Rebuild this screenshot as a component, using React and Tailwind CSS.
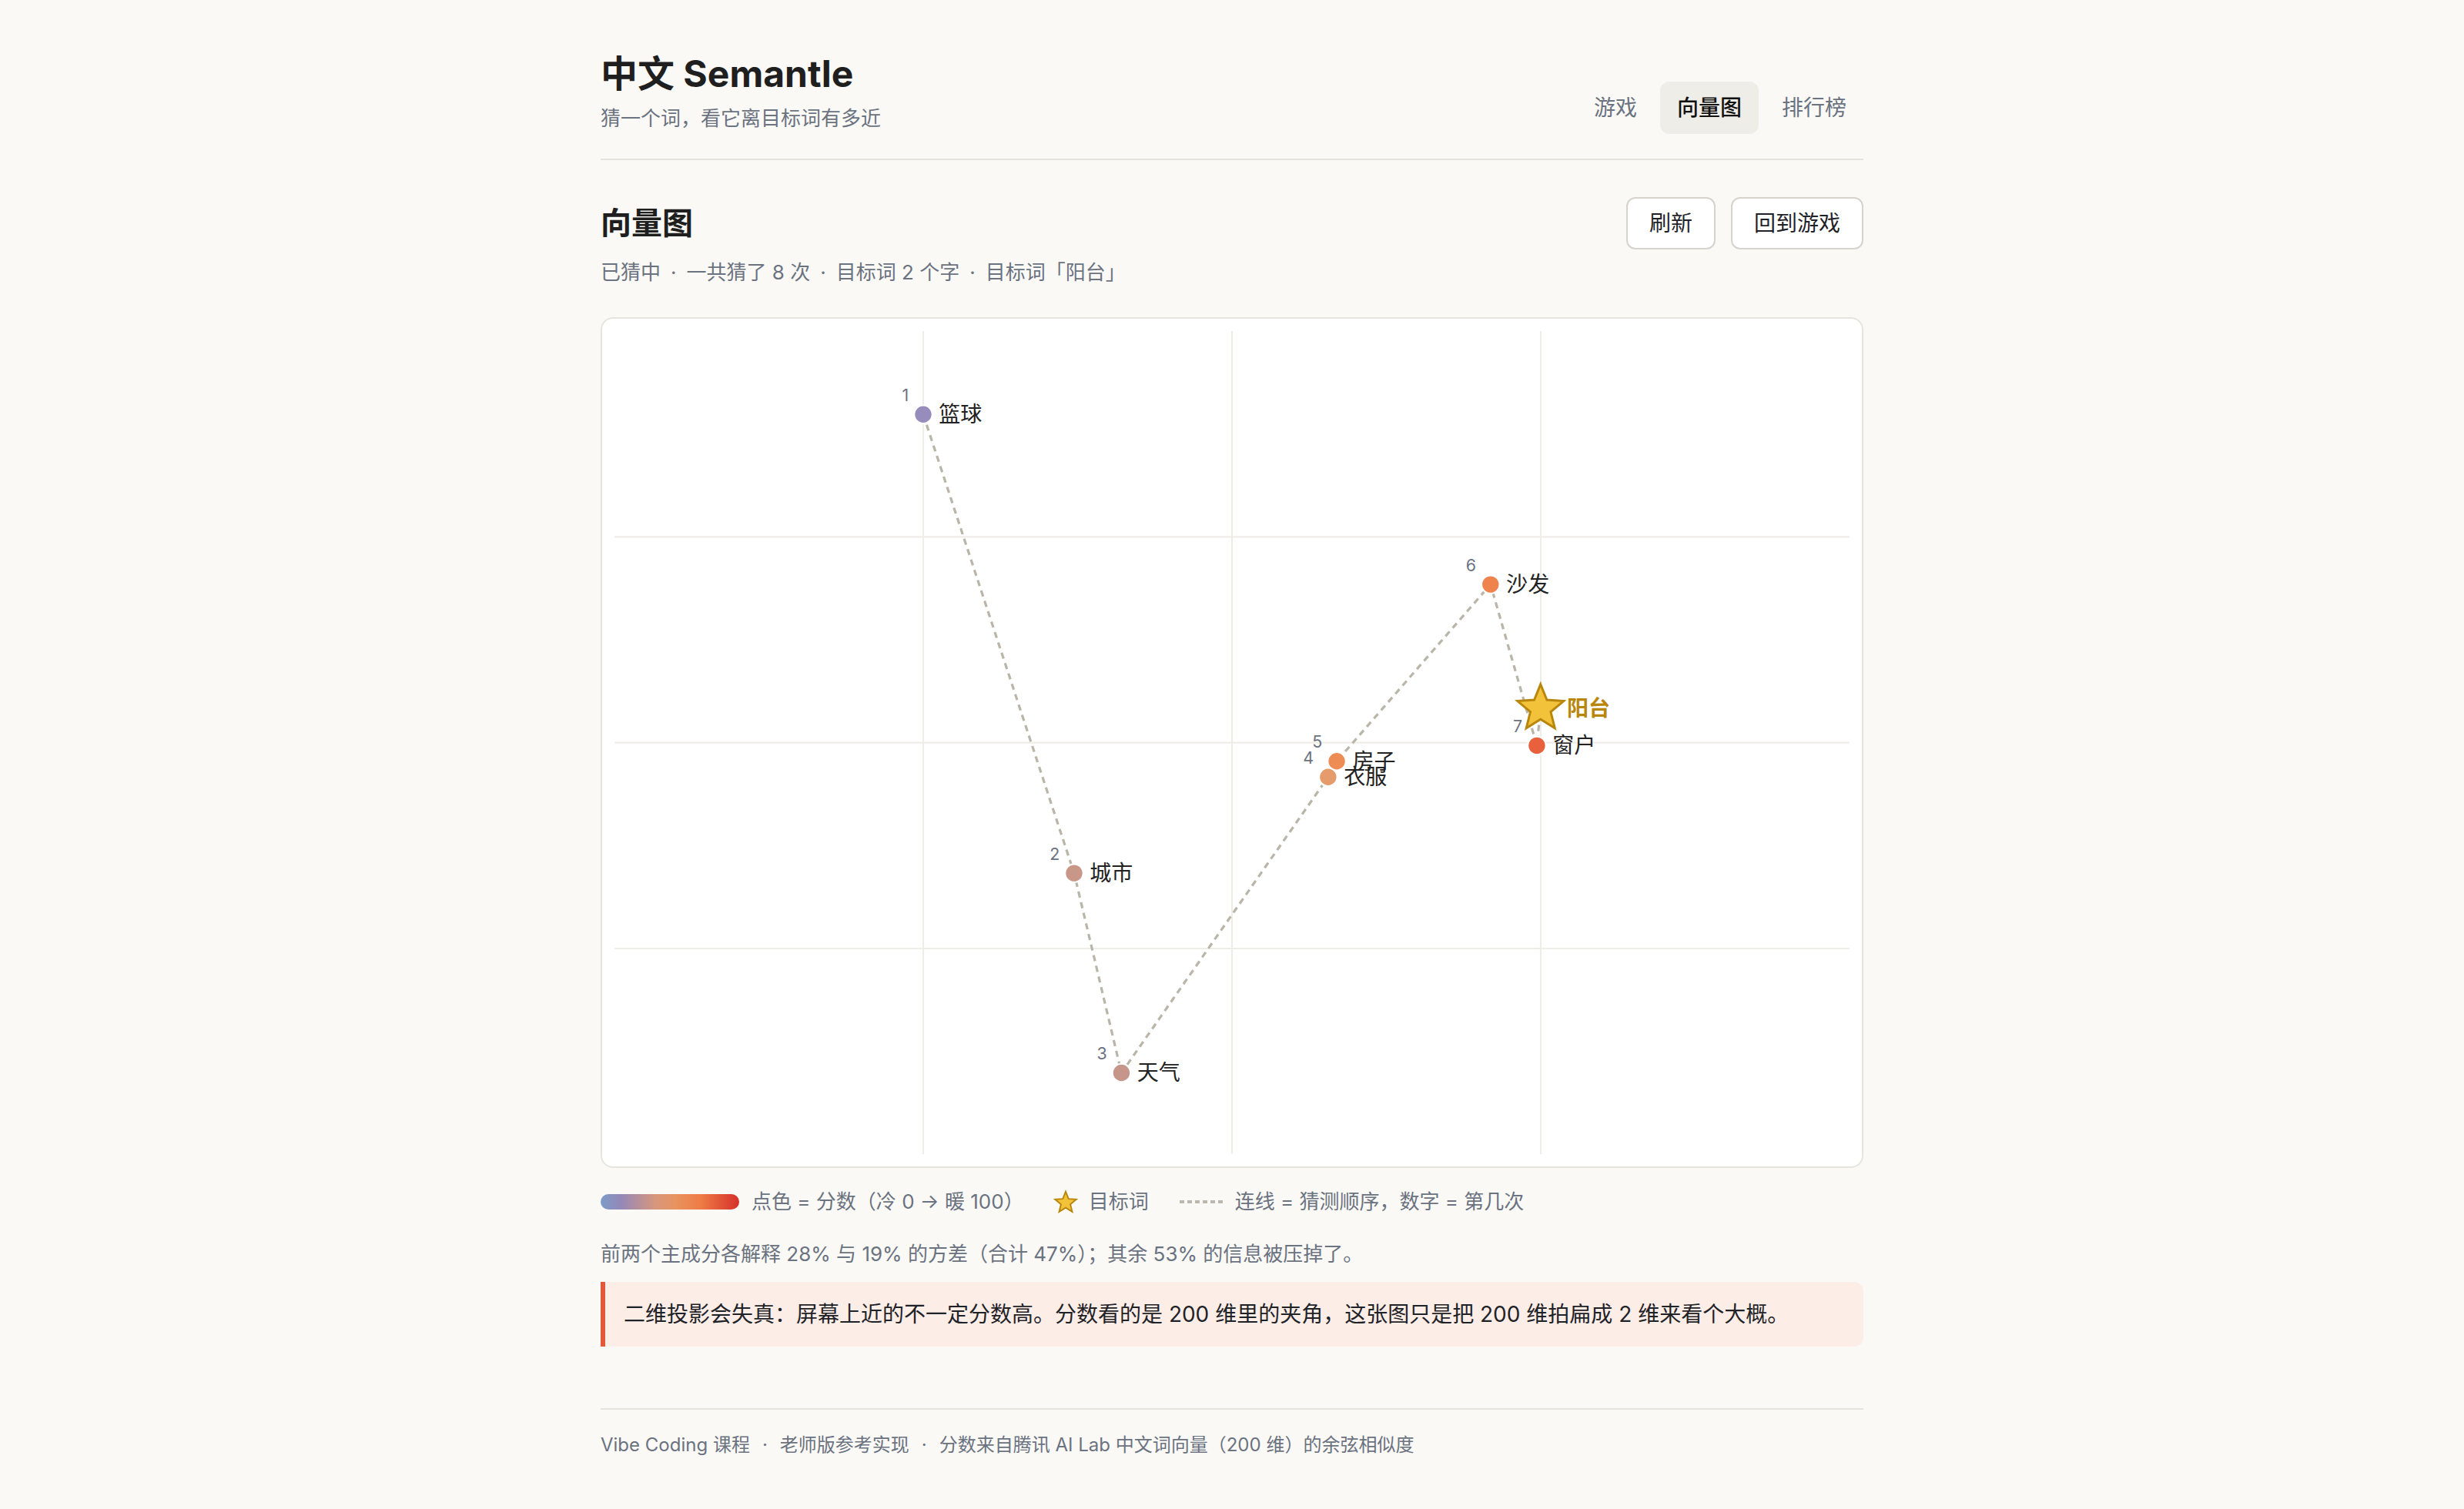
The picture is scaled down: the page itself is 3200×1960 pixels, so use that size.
import React from 'react';

const guesses = [
  { n: 1, word: '篮球', x: 150, y: 40.5, color: '#968dbd' },
  { n: 2, word: '城市', x: 223.3, y: 263.4, color: '#c99787' },
  { n: 3, word: '天气', x: 246.3, y: 360.4, color: '#c7968a' },
  { n: 4, word: '衣服', x: 346.7, y: 216.7, color: '#e59b6c' },
  { n: 5, word: '房子', x: 350.9, y: 209, color: '#ee8c55' },
  { n: 6, word: '沙发', x: 425.6, y: 123.1, color: '#ef834e' },
  { n: 7, word: '窗户', x: 448.1, y: 201.4, color: '#e8613c' },
];

const target = { word: '阳台', x: 449.9, y: 183.4 };

// 5-point star polygon around (cx, cy)
const starPoints = (cx, cy, R, r) => {
  const pts = [];
  for (let i = 0; i < 10; i++) {
    const rad = i % 2 === 0 ? R : r;
    const a = -Math.PI / 2 + (i * Math.PI) / 5;
    pts.push(`${(cx + rad * Math.cos(a)).toFixed(2)},${(cy + rad * Math.sin(a)).toFixed(2)}`);
  }
  return pts.join(' ');
};

const Sep = () => <span className="mx-[13px]">·</span>;

const VectorChart = () => {
  const path = [...guesses, target].map((p) => `${p.x},${p.y}`).join(' ');
  return (
    <svg viewBox="0 0 600 400" className="block w-full h-auto">
      {/* grid */}
      {[150, 300, 450].map((x) => (
        <line key={`v${x}`} x1={x} y1={0} x2={x} y2={400} stroke="#efede8" strokeWidth="0.8" />
      ))}
      {[100, 200, 300].map((y) => (
        <line key={`h${y}`} x1={0} y1={y} x2={600} y2={y} stroke="#efede8" strokeWidth="0.8" />
      ))}

      {/* guess order */}
      <polyline points={path} fill="none" stroke="#bab5a9" strokeWidth="1.2" strokeDasharray="3 2.3" />

      {guesses.map((g) => (
        <g key={g.n}>
          <circle cx={g.x} cy={g.y} r="4.4" fill={g.color} stroke="#fff" strokeWidth="0.8" />
          <text x={g.x - 7} y={g.y - 6.5} textAnchor="end" fontSize="8" fill="#6b7280">
            {g.n}
          </text>
          <text x={g.x + 7.6} y={g.y} dominantBaseline="central" fontSize="10.5" fill="#222222">
            {g.word}
          </text>
        </g>
      ))}

      <polygon
        points={starPoints(target.x, target.y, 11.8, 5.2)}
        fill="#f3c23b"
        stroke="#b8860b"
        strokeWidth="1.1"
      />
      <text
        x={target.x + 12.8}
        y={target.y}
        dominantBaseline="central"
        fontSize="10.5"
        fontWeight="600"
        fill="#b8860b"
      >
        {target.word}
      </text>
    </svg>
  );
};

const App = () => {
  return (
    <div className="min-h-screen bg-[#faf9f6] text-[#1f2328] font-['Inter','Noto_Sans_CJK_SC',sans-serif]">
      <div className="max-w-[1640px] mx-auto pt-16 pb-32">
        {/* header */}
        <header className="flex justify-between items-end pb-8 border-b-2 border-[#e6e3dd]">
          <div>
            <h1 className="text-[48px] leading-[64px] font-bold text-[#1f1f1f]">中文 Semantle</h1>
            <p className="mt-1.5 text-[26px] leading-10 text-[#6b7280]">猜一个词，看它离目标词有多近</p>
          </div>
          <nav className="flex items-center gap-2 text-[28px]">
            <span className="px-[22px] py-4 leading-9 rounded-xl text-[#6b7280]">游戏</span>
            <span className="px-[22px] py-4 leading-9 rounded-xl bg-[#efede8] text-[#111] font-medium">向量图</span>
            <span className="px-[22px] py-4 leading-9 rounded-xl text-[#6b7280]">排行榜</span>
          </nav>
        </header>

        {/* section head */}
        <div className="flex justify-between items-start mt-12">
          <div>
            <h2 className="text-[40px] leading-[68px] font-semibold text-[#1f1f1f]">向量图</h2>
            <p className="mt-[10px] text-[26px] leading-10 text-[#6b7280]">
              已猜中<Sep />一共猜了 8 次<Sep />目标词 2 个字<Sep />目标词「阳台」
            </p>
          </div>
          <div className="flex gap-5">
            <button className="h-[68px] px-[28px] text-[28px] bg-white border-2 border-[#d6d3cc] rounded-xl text-[#1f2328]">
              刷新
            </button>
            <button className="h-[68px] px-[28px] text-[28px] bg-white border-2 border-[#d6d3cc] rounded-xl text-[#1f2328]">
              回到游戏
            </button>
          </div>
        </div>

        {/* chart */}
        <div className="mt-[38px] bg-white border-2 border-[#e7e4de] rounded-2xl p-4">
          <VectorChart />
        </div>

        {/* legend */}
        <div className="mt-6 flex items-center text-[26px] leading-10 text-[#6b7280]">
          <span className="w-[180px] h-[20px] rounded-full bg-[linear-gradient(to_right,#7c9cc8,#9488b8_15%,#d8977c_40%,#e9925e_55%,#ef7c46_72%,#d6302a)]" />
          <span className="ml-4">点色 = 分数（冷 0 → 暖 100）</span>
          <svg viewBox="0 0 20 20" className="ml-[38px] w-8 h-8">
            <polygon points={starPoints(10, 10.8, 9, 4)} fill="#f3c23b" stroke="#b8860b" strokeWidth="1.2" />
          </svg>
          <span className="ml-[14px]">目标词</span>
          <svg width="56" height="8" className="ml-10">
            <line x1="0" y1="4" x2="56" y2="4" stroke="#bdb8ad" strokeWidth="4" strokeDasharray="6 4" />
          </svg>
          <span className="ml-4">连线 = 猜测顺序，数字 = 第几次</span>
        </div>

        <p className="mt-7 text-[26px] leading-10 text-[#6b7280]">
          前两个主成分各解释 28% 与 19% 的方差（合计 47%）；其余 53% 的信息被压掉了。
        </p>

        <div className="mt-4 bg-[#fcede7] border-l-[6px] border-[#e2583a] rounded-r-xl pl-6 pr-8 py-[22px] text-[28px] leading-10 text-[#1f2328]">
          二维投影会失真：屏幕上近的不一定分数高。分数看的是 200 维里的夹角，这张图只是把 200 维拍扁成 2 维来看个大概。
        </div>

        <footer className="mt-20 border-t-2 border-[#e6e3dd] pt-[28px] text-[24px] leading-9 text-[#6b7280]">
          Vibe Coding 课程<span className="mx-[16px]">·</span>老师版参考实现<span className="mx-[16px]">·</span>分数来自腾讯 AI Lab 中文词向量（200 维）的余弦相似度
        </footer>
      </div>
    </div>
  );
};

export default App;
